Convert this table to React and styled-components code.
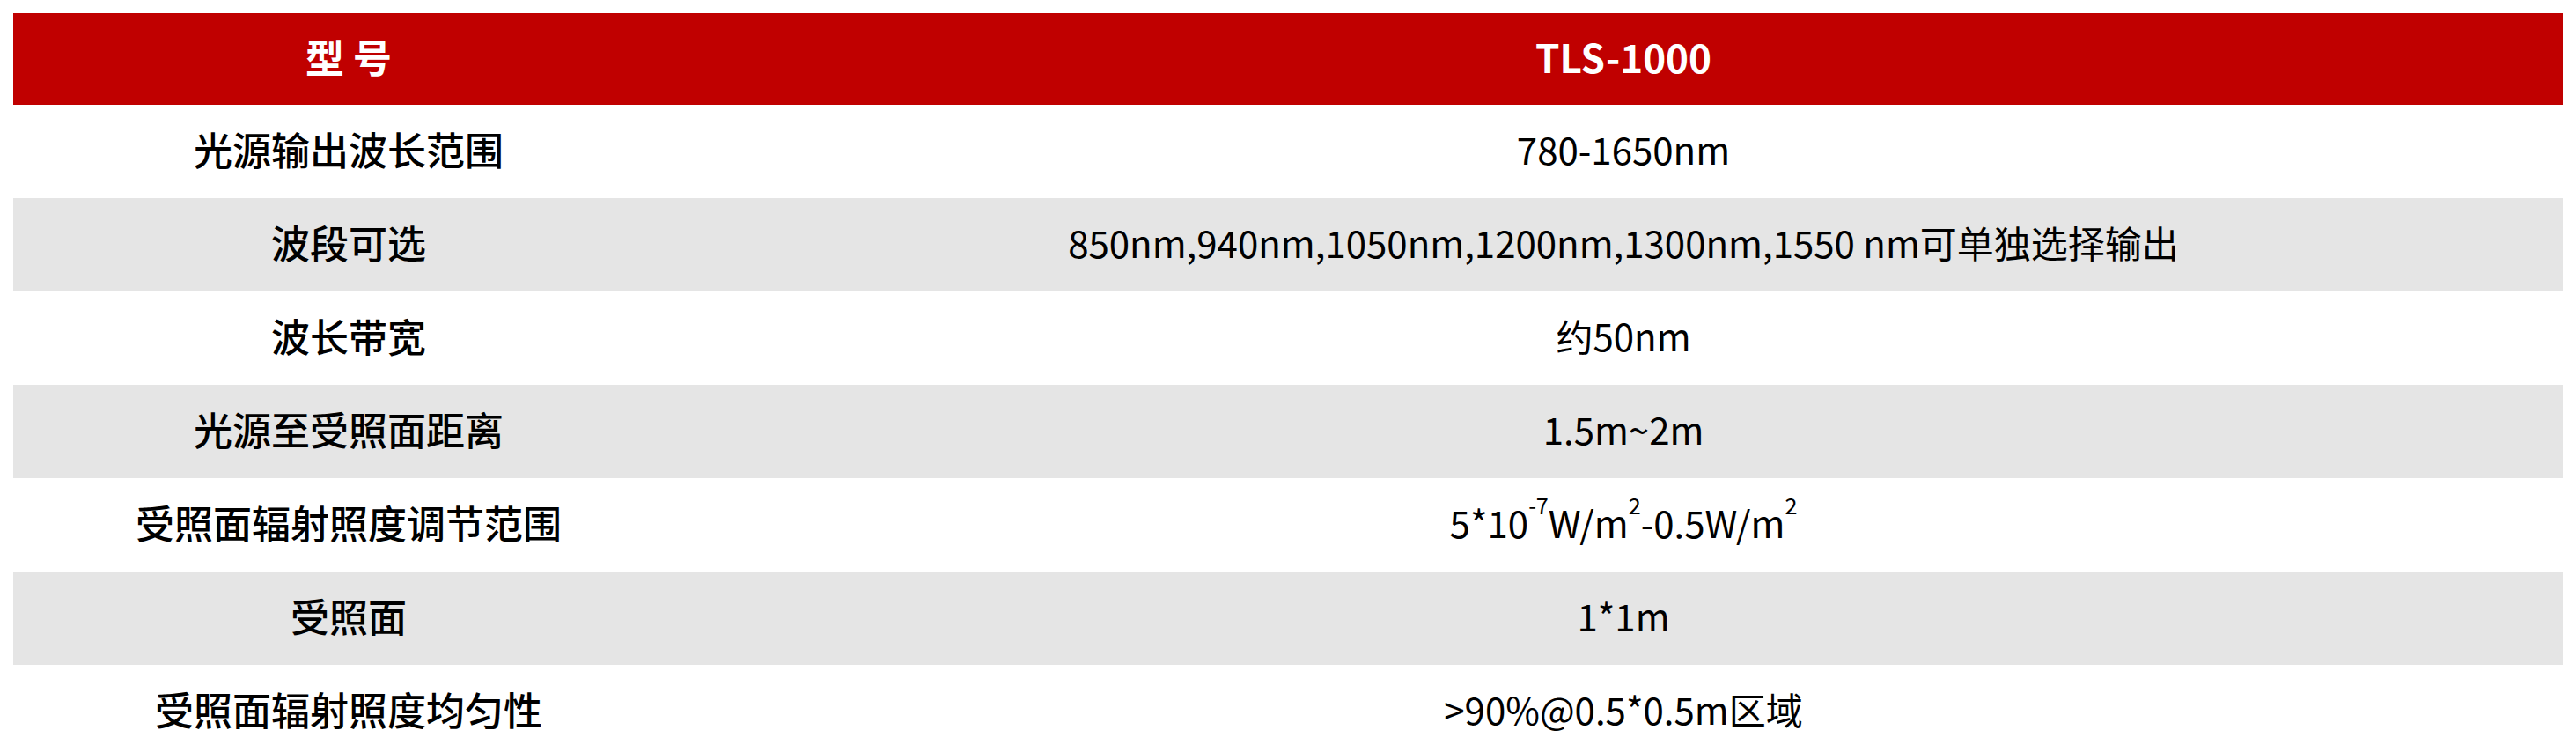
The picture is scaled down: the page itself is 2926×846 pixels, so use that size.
import React from "react";
import styled, { createGlobalStyle } from "styled-components";

const GlobalStyle = createGlobalStyle`
  html, body {
    margin: 0;
    padding: 0;
    background: #ffffff;
  }
  body {
    font-family: "Noto Sans CJK SC", "Noto Sans", sans-serif;
  }
`;

const Page = styled.div`
  padding: 15px 15px 0 15px;
`;

const Table = styled.div`
  display: flex;
  flex-direction: column;
  width: 100%;
`;

const Row = styled.div`
  display: grid;
  grid-template-columns: 762px 1fr;
  height: ${(p) => (p.$head ? "104px" : "106px")};
  background: ${(p) => (p.$head ? "#c00000" : p.$alt ? "#e5e5e5" : "#ffffff")};
  color: ${(p) => (p.$head ? "#ffffff" : "#000000")};
`;

const Cell = styled.div`
  display: flex;
  align-items: center;
  justify-content: center;
  padding-bottom: 6px;
  font-size: ${(p) => (p.$head ? "44px" : "42px")};
  font-weight: ${(p) => (p.$head ? 700 : 400)};
  white-space: nowrap;
  line-height: 1;

  sup {
    font-size: 0.6em;
    line-height: 0;
    position: relative;
    top: -0.8em;
    vertical-align: baseline;
  }
`;

const Label = styled(Cell)`
  font-size: 44px;
  font-weight: 500;
`;

const rows = [
  ["光源输出波长范围", "780-1650nm"],
  ["波段可选", "850nm,940nm,1050nm,1200nm,1300nm,1550 nm可单独选择输出"],
  ["波长带宽", "约50nm"],
  ["光源至受照面距离", "1.5m~2m"],
  [
    "受照面辐射照度调节范围",
    <>
      5*10<sup>-7</sup>W/m<sup>2</sup>-0.5W/m<sup>2</sup>
    </>,
  ],
  ["受照面", "1*1m"],
  ["受照面辐射照度均匀性", ">90%@0.5*0.5m区域"],
];

export default function App() {
  return (
    <Page>
      <GlobalStyle />
      <Table>
        <Row $head>
          <Cell $head>型&nbsp;号</Cell>
          <Cell $head>TLS-1000</Cell>
        </Row>
        {rows.map(([label, value], i) => (
          <Row key={i} $alt={i % 2 === 1}>
            <Label>{label}</Label>
            <Cell>{value}</Cell>
          </Row>
        ))}
      </Table>
    </Page>
  );
}
